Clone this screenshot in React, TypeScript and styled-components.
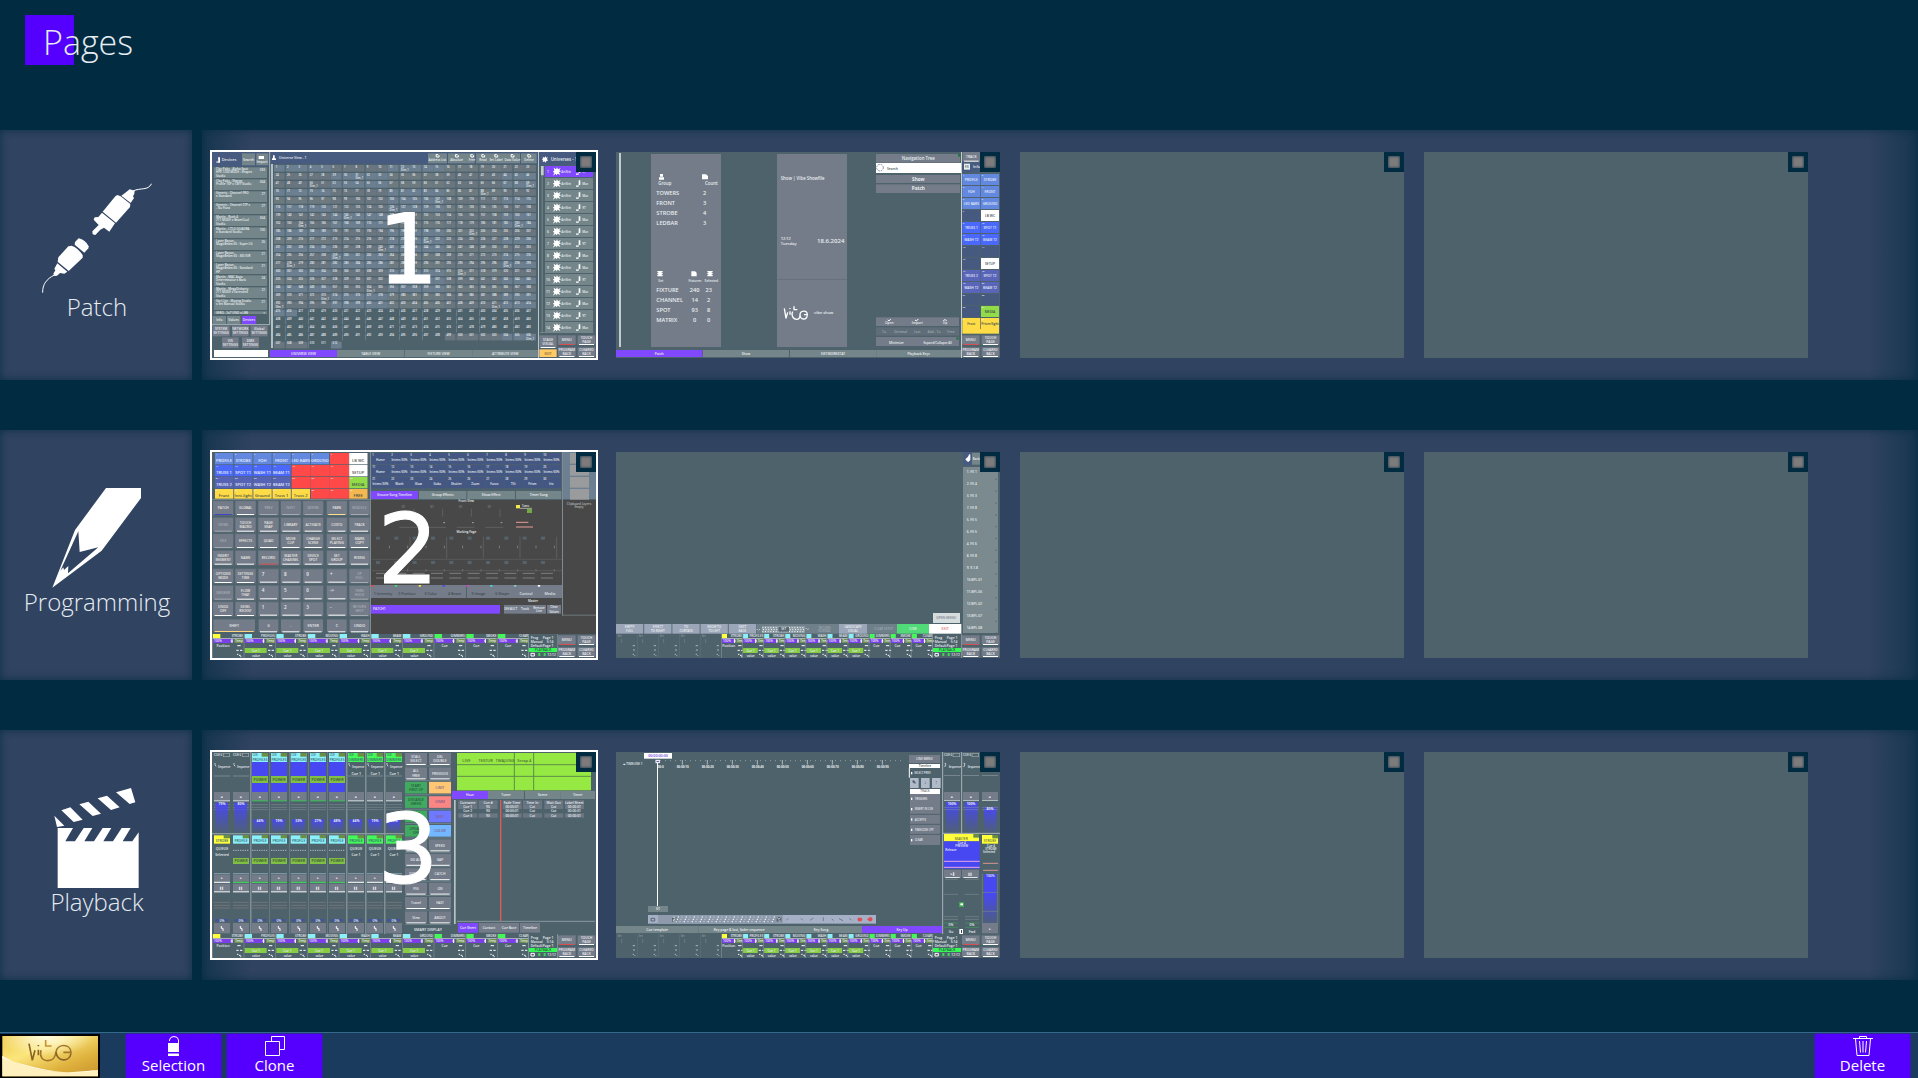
import React from "react";
import styled, { createGlobalStyle, css } from "styled-components";

const color = {
  page: "#002b40",
  panel: "#304361",
  screen: "#4e626c",
  accent: "#5500ff",
  bar: "#1b3b5e",
  purple: "#8048ff",
  key: "#747c89",
  soft: "#74868a",
  head: "#475a7f",
};

const GlobalStyle = createGlobalStyle`
  *, *::before, *::after { box-sizing: border-box; }
  body {
    margin: 0;
    background: ${color.page};
    color: #e6ecf2;
    font-family: "Open Sans", "Noto Sans", sans-serif;
  }
  button { font-family: inherit; color: inherit; border: 0; padding: 0; cursor: pointer; }
`;

const Page = styled.div`
  min-height: 100vh;
  display: flex;
  flex-direction: column;
`;

const Header = styled.header`
  height: 130px;
  padding: 15px 25px;
`;

const Title = styled.h1`
  margin: 0;
  width: 49px;
  height: 50px;
  padding-left: 18px;
  background: ${color.accent};
  font-size: 34px;
  line-height: 54px;
  font-weight: 300;
  white-space: nowrap;
`;

const Rows = styled.main`
  flex: 1;
  display: flex;
  flex-direction: column;
  gap: 50px;
  padding-bottom: 50px;
`;

const Row = styled.section`
  display: flex;
  gap: 10px;
  height: 250px;
`;

const Category = styled.button`
  flex: 0 0 192px;
  display: flex;
  flex-direction: column;
  align-items: center;
  justify-content: center;
  padding-left: 2px;
  background: ${color.panel};
  box-shadow: inset 0 0 8px rgba(0, 43, 64, 0.8);
`;

const CategoryName = styled.span`
  font-size: 24px;
  line-height: 28px;
  font-weight: 300;
  margin-bottom: 6px;
`;

const Strip = styled.div`
  flex: 1;
  min-width: 0;
  display: flex;
  gap: 20px;
  padding: 22px 10px;
  overflow: hidden;
  background:
    linear-gradient(90deg, rgba(0, 43, 64, 0.55), transparent 50px),
    linear-gradient(270deg, rgba(0, 43, 64, 0.55), transparent 50px),
    ${color.panel};
  box-shadow: inset 0 0 8px rgba(0, 43, 64, 0.7);
`;

const Slot = styled.div`
  position: relative;
  flex: 0 1 384px;
  height: 206px;
`;

const Thumb = styled.button<{ $selected?: boolean }>`
  display: block;
  width: 100%;
  height: 100%;
  background: ${color.screen};
  ${(p) => p.$selected && css`box-shadow: 0 0 0 2px #fff;`}
`;

const Screen = styled.svg`
  display: block;
  width: 100%;
  height: 100%;
  font-family: "Open Sans", "Noto Sans", sans-serif;
`;

const SlotNumber = styled.span`
  position: absolute;
  inset: 0 0 10px 8px;
  display: flex;
  align-items: center;
  justify-content: center;
  pointer-events: none;
  color: #fff;
  font-family: "DejaVu Sans", sans-serif;
  font-size: 96px;
  line-height: 100px;
  -webkit-text-stroke: 1px #fff;
`;

const Tick = styled.input`
  position: absolute;
  top: 0;
  right: 0;
  width: 20px;
  height: 20px;
  margin: 0;
  appearance: none;
  background: #7d7b7c;
  box-shadow: inset 0 0 0 4px ${color.page}, inset 0 0 3px 4px ${color.page};
`;

const Footer = styled.footer`
  display: flex;
  height: 46px;
  gap: 6px;
  padding: 1px 8px 0 0;
  border-top: 1px solid #356a8c;
  background: ${color.bar};
`;

const Brand = styled.button`
  flex: 0 0 100px;
  margin-right: 20px;
  background: #000;
`;

const Action = styled.button<{ $end?: boolean }>`
  flex: 0 0 95px;
  display: flex;
  flex-direction: column;
  align-items: center;
  padding-top: 2px;
  background: ${color.accent};
  box-shadow: 0 0 2px ${color.accent};
  margin-left: ${(p) => (p.$end ? "auto" : "0")};
  color: #fff;
  font-size: 15px;
  line-height: 18px;
`;

/* ---------- drawing helpers for the page previews ---------- */

type BoxProps = { x: number; y: number; w: number; h: number; f: string };
const B = ({ x, y, w, h, f }: BoxProps) => <rect x={x} y={y} width={w} height={h} fill={f} />;

type LabelProps = { x: number; y: number; t: string | number; s?: number; f?: string; a?: "start" | "middle" | "end"; b?: boolean };
const L = ({ x, y, t, s = 11, f = "#e8edf0", a = "start", b }: LabelProps) => (
  <text x={x} y={y} fontSize={s} fill={f} textAnchor={a} fontWeight={b ? 700 : 600}>{t}</text>
);

const Key = ({ x, y, w, h, t, t2, line, f = color.key, c = "#eceff2", s = 11 }: {
  x: number; y: number; w: number; h: number; t?: string; t2?: string; line?: string; f?: string; c?: string; s?: number;
}) => (
  <g>
    <B x={x} y={y} w={w} h={h} f={f} />
    {t && <L x={x + w / 2} y={y + h / 2 + (t2 ? -3 : 4)} t={t} a="middle" f={c} s={s} />}
    {t2 && <L x={x + w / 2} y={y + h / 2 + 10} t={t2} a="middle" f={c} s={s} />}
    {line && <B x={x + 4} y={y + h - 2} w={w - 8} h={3} f={line} />}
  </g>
);

const range = (n: number) => Array.from({ length: n }, (_, i) => i);

const SystemKeys = ({ x }: { x: number }) => (
  <g>
    <Key x={x} y={586} w={53} h={28} t="MENU" line="#d94f4f" s={10} />
    <Key x={x + 59} y={586} w={53} h={28} t="TOUCH" t2="PAGE" line="#fff" s={10} />
    <Key x={x} y={622} w={53} h={28} t="PROGRAM" t2="BACK" line="#fff" s={10} />
    <Key x={x + 59} y={622} w={53} h={28} t="CLEARED" t2="BACK" line="#fff" s={10} />
  </g>
);

const dockColors = ["#ffff3c", ...Array(6).fill("#8cf0fa"), ...Array(3).fill("#44f85a")];
const dockNames = ["STROBE", "PROFILES", "STROBE", "MOVING", "WASH", "BEAM", "GROUND", "DIMMERS", "SMOKE", "CLEAR"];

const Dock = ({ x, pitch, status }: { x: number; pitch: number; status: number }) => {
  const k = pitch / 95;
  return (
    <g>
      {dockColors.map((f, i) => {
        const l = x + i * pitch;
        return (
          <g key={i}>
            <B x={l - 3} y={582} w={2} h={72} f="#7d8c92" />
            <B x={l} y={582} w={Math.max(15, 22 * k)} h={12} f={f} />
            <L x={l + 90 * k} y={592} t={dockNames[i]} a="end" s={9} />
            <B x={l} y={594} w={91 * k} h={2} f="#cfd8da" />
            <B x={l} y={597} w={59 * k} h={12} f="#7a3fe8" />
            <L x={l + 3} y={606} t="100%" s={9} />
            <path d={`M${l + 57 * k} 597v12M${l + 53 * k} 603h6`} stroke="#fff" strokeWidth={3} />
            <B x={l + 64 * k} y={597} w={27 * k} h={12} f="#6f8f52" />
            <L x={l + 67 * k} y={606} t="Temp" s={8} />
            {i > 0 && i < 7 ? (
              <>
                <B x={l} y={624} w={66 * k} h={15} f="#86cc45" />
                <L x={l + 33 * k} y={635} t="Cue 1" s={9} a="middle" />
                <L x={l + 34 * k} y={652} t="value" s={9} a="middle" />
              </>
            ) : (
              <L x={l + 30 * k} y={622} t={i ? "Cue" : "Position"} s={10} a="middle" />
            )}
            <path d={`M${l + 73 * k} 617h10M${l + 70 * k} 631h7m4 0h7M${l + 72 * k} 643h4m2 3h5m-1 4h3`} stroke="#fff" strokeWidth={3} />
          </g>
        );
      })}
      <B x={status - 2} y={582} w={2} h={72} f="#9aa8ac" />
      <L x={status + 5} y={596} t="Prog" s={10} />
      <L x={status + 73} y={596} t="Page 1" s={10} a="end" />
      <L x={status + 5} y={608} t="Manual" s={10} />
      <L x={status + 73} y={608} t="5:14" s={10} a="end" />
      <L x={status + 5} y={620} t="Default" s={10} />
      <L x={status + 73} y={620} t="Page 1" s={10} a="end" />
      <B x={status} y={624} w={84} h={12} f="#35fa55" />
      <L x={status + 42} y={634} t="PLAYBACK" s={10} a="middle" f="#33504a" />
      <path d={`M${status + 6} 640h10v8h-10z`} fill="none" stroke="#fff" strokeWidth={3} />
      <B x={status + 28} y={639} w={6} h={9} f="#41d658" />
      <B x={status + 44} y={639} w={6} h={9} f="#41d658" />
      <L x={status + 55} y={648} t="12:12" s={10} />
    </g>
  );
};

const Tabs = ({ y, h, items }: { y: number; h: number; items: [number, number, string, boolean?][] }) => (
  <g>
    {items.map(([x, w, t, on]) => (
      <Key key={x} x={x} y={y} w={w} h={h} t={t} f={on ? color.purple : color.soft} s={10} />
    ))}
  </g>
);

const devices = [
  ["Clay Paky - Alpha Spot", "HPE 1200 MODE : Shapes", "Studio", "333"], ["Clay Paky - Sharpy", "Profile 10P x CMY Studio", "", "304"],
  ["Generic - Channel PRO", "x Standard", "", "27"], ["Generic - Channel CTP v", "- No Flora", "", "27"],
  ["Martin - Rush 4", "211 MODE x BeamCool", "Studio", "304"], ["Martin - LT2.0 QUADRA", "x Standard Studio", "", "100"],
  ["Laser Rayan -", "MagicBeam 60 : Super LG", "", "26"], ["Laser Rayan -", "MagicBeam 60 : 300 NIR", "", "21"],
  ["Laser Rayan -", "MagicBeam 60 : Standard", "HP", "21"], ["Martin - MAC Aura", "Determinator x Back", "Studio", "24"],
  ["Martin - MegaDisharty", "211 MODE x Extended", "Studio", "22"], ["Vari Lite - Moving Studio", "x Set Manual Studio", "", "21"],
  ["VERO - 2x7 UNO x LBB", "", "", "1"],
];
const columnStarts = [1, 3, 6, 8, 11, 13, 16, 18, 21];

const PatchScreen = () => (
  <Screen viewBox="36 36 1152 618" preserveAspectRatio="none" aria-hidden="true">
    <B x={36} y={36} w={172} h={44} f={color.head} />
    <path d="M54 52h6v16h-8v-4h3zM48 62v5l3 3" fill="#fff" />
    <L x={65} y={62} t="Devices" s={12} />
    <Key x={126} y={40} w={39} h={36} t="Search" f={color.soft} s={10} />
    <Key x={169} y={40} w={36} h={36} f={color.soft} />
    <B x={176} y={48} w={16} h={9} f="#fff" />
    <L x={186} y={70} t="Import" a="middle" s={10} />
    {devices.map((d, i) => {
      const y = 82 + i * 36;
      return (
        <g key={i}>
          <B x={42} y={y} w={159} h={i === 12 ? 8 : 32} f={color.soft} />
          <L x={48} y={y + 8} t={d[0]} s={9} />
          <L x={48} y={y + 18} t={d[1]} s={9} />
          <L x={48} y={y + 28} t={d[2]} s={9} />
          <L x={195} y={y + 12} t={d[3]} s={9} a="end" />
        </g>
      );
    })}
    <B x={36} y={522} w={170} h={6} f={color.screen} />
    <Tabs y={528} h={24} items={[[38, 40, "Info"], [81, 40, "Values"], [126, 42, "Devices", true]]} />
    <path d="M209 36V554H36" fill="none" stroke="#aab6bb" strokeWidth={3} />
    <Key x={38} y={557} w={51} h={32} t="SYSTEM" t2="SETTINGS" s={10} />
    <Key x={96} y={557} w={50} h={32} t="NETWORK" t2="SETTINGS" s={10} />
    <Key x={152} y={557} w={51} h={32} t="Global" t2="SETTINGS" s={10} />
    <Key x={66} y={592} w={50} h={32} t="VIS" t2="SETTINGS" s={10} />
    <Key x={126} y={592} w={51} h={32} t="DMX" t2="SETTINGS" s={10} />
    <B x={42} y={630} w={162} h={21} f="#fff" />

    <B x={212} y={36} w={802} h={36} f={color.head} />
    <path d="M216 60v-4l3-3v-7h5v7l4 3v4z" fill="#fff" />
    <L x={237} y={56} t="Universe View - 1" s={10} />
    <Key x={684} y={40} w={57} h={30} f={color.soft} />
    <Key x={744} y={40} w={80} h={30} f={color.soft} />
    <Key x={828} y={40} w={132} h={30} f={color.soft} />
    <Key x={963} y={40} w={47} h={30} f={color.soft} />
    {([[712, "Address List"], [770, "Absolute"], [816, "Free"], [849, "Read"], [888, "Set Label"], [937, "Data Value"], [987, "Delete"]] as [number, string][]).map(([x, t]) => (
      <g key={x}>
        <path d={`M${x - 4} 44h6l3 3v4h-8z`} fill="none" stroke="#fff" strokeWidth={3} />
        <L x={x} y={63} t={t} a="middle" s={9} />
      </g>
    ))}
    <B x={213} y={72} w={6} h={552} f="#b4c1c2" />
    {range(512).map((n) => {
      const r = Math.floor(n / 23);
      const c = n % 23;
      const x = 222 + c * 34.17;
      const y = 75 + r * 24.1;
      const lit = r < 18 || n < 416 || (r === 21 && c > 14) || (r === 22 && (c < 3 || c === 5));
      const seed = (r * 7 + Math.floor(c / 5) * 3 + r * r) % 5;
      const tagged = (n * 37 + 11) % 19 === 0;
      return (
        <g key={n}>
          {lit && <B x={x + (columnStarts.includes(c) ? 1 : 0)} y={y} w={columnStarts.includes(c + 1) ? 32 : 34} h={20} f={seed < 2 ? "#6b7f91" : seed < 4 ? "#69757f" : "#6d7a80"} />}
          {!lit && columnStarts.includes(c) && <B x={x} y={y} w={2} h={20} f="#77878e" />}
          <L x={x + 5} y={y + 8} t={n + 1} s={8} f="#f0f4f6" />
          {tagged && lit && <L x={x + 5} y={y + 18} t="Dim_1" s={8} />}
        </g>
      );
    })}
    <Tabs y={630} h={21} items={[[210, 201, "UNIVERSE VIEW", true], [411, 202, "TABLE VIEW"], [615, 202, "FIXTURE VIEW"], [817, 197, "ATTRIBUTE VIEW"]]} />

    <B x={1014} y={36} w={3} h={618} f="#bcc6ca" />
    <B x={1018} y={36} w={170} h={40} f={color.head} />
    <path d="M1028 50l5 3 4-4 2 4 5-1-3 5 3 5-5 1-2 5-4-4-5 3 1-6-3-3 3-3z" fill="#fff" />
    <L x={1052} y={62} t="Universes - 1" s={13} />
    <B x={1023} y={78} w={8} h={28} f="#c3cdcd" />
    <B x={1025} y={106} w={3} h={470} f="#74868a" />
    {range(14).map((i) => {
      const y = 78 + i * 36;
      return (
        <g key={i}>
          <B x={1035} y={y} w={144} h={33} f={i ? color.soft : color.purple} />
          <L x={1044} y={y + 20} t={i + 1} a="middle" s={10} />
          <path transform={`translate(1071 ${y + 16})`} d="M-10-11l7 5 3-6 3 6 8-4-4 7 5 3-6 3 4 8-8-4-3 5-3-5-8 6 4-9-5-3 5-3z" fill="#fff" />
          <L x={1084} y={y + 20} t="ArtNet" s={9} />
          <path transform={`translate(1133 ${y})`} d="M3 7h5v14h-5v5h-8v-4l4 1 4-3z" fill="#fff" />
          <L x={1147} y={y + 20} t={i % 3 ? "Mac" : "97"} s={9} />
        </g>
      );
    })}
    <B x={1020} y={576} w={160} h={3} f="#74868a" />
    <Key x={1018} y={586} w={52} h={37} t="STAGE" t2="VISUAL" line="#fff" s={10} />
    <Key x={1018} y={628} w={52} h={23} t="EDIT" f="#ffc966" c="#795f30" s={10} />
    <SystemKeys x={1074} />
  </Screen>
);

const Info = ({ rows, y, cols }: { rows: (string | number)[][]; y: number; cols: number[] }) => (
  <g>
    {rows.map((r, i) => (
      <g key={i}>
        <L x={154} y={y + i * 30} t={r[0]} s={17} />
        {r.slice(1).map((v, j) => <L key={j} x={cols[j]} y={y + i * 30} t={v} s={17} a="middle" />)}
      </g>
    ))}
  </g>
);

const ShowScreen = () => (
  <Screen viewBox="33 36 1152 618" preserveAspectRatio="none" aria-hidden="true">
    <B x={42} y={39} w={6} h={582} f="#c2cccc" />
    <B x={138} y={42} w={210} h={579} f={color.key} />
    <B x={516} y={42} w={210} h={579} f={color.key} />
    <path d="M165 102h9v8h-9zM162 112h15v7h-15zM291 103h12l6 5v10h-18z" fill="#fff" />
    <L x={160} y={136} t="Group" s={13} />
    <L x={338} y={136} t="Count" s={13} a="end" />
    <Info y={166} cols={[299]} rows={[["TOWERS", 2], ["FRONT", 3], ["STROBE", 4], ["LEDBAR", 3]]} />
    <path d="M157 393h16v4h-3v2h3v4h-3v2h3v4h-16v-4h3v-2h-3v-4h3v-2h-3zM259 394h11l5 4v11h-16zM307 393h16v4h-3v2h3v4h-3v2h3v4h-16v-4h3v-2h-3v-4h3v-2h-3z" fill="#fff" />
    <L x={160} y={425} t="Set" s={10} />
    <L x={270} y={425} t="Fixtures" s={10} a="middle" />
    <L x={319} y={425} t="Selected" s={10} a="middle" />
    <Info y={457} cols={[269, 311]} rows={[["FIXTURE", 240, 23], ["CHANNEL", 14, 2], ["SPOT", 93, 8], ["MATRIX", 0, 0]]} />
    <L x={527} y={120} t="Show | Vibe Showfile" s={13} />
    <L x={527} y={300} t="12:12" s={12} />
    <L x={527} y={315} t="Tuesday" s={12} />
    <L x={718} y={309} t="18.6.2024" s={18} a="end" />
    <B x={516} y={417} w={210} h={3} f="#66717c" />
    <path d="M538 505l5 30 5-18M555 514v10M555 504v3M567 499v10h10M563 515c-5 8 0 23 12 23 9 0 10-10 10-14 0-12 22-16 22 0h-10M607 526c-3 16-21 14-22-2" fill="none" stroke="#fff" strokeWidth={4} />
    <L x={627} y={522} t="vibe.show" s={12} />
    <B x={813} y={42} w={252} h={26} f={color.key} />
    <L x={940} y={60} t="Navigation Tree" s={13} a="middle" />
    <B x={1059} y={42} w={8} h={8} f="#267346" />
    <B x={813} y={69} w={255} h={30} f="#fff" />
    <circle cx={825} cy={83} r={10} fill="none" stroke="#435565" strokeWidth={2} strokeDasharray="5 3" />
    <L x={846} y={89} t="Search" s={10} f="#455" />
    <B x={813} y={105} w={252} h={24} f={color.key} />
    <L x={940} y={122} t="Show" s={14} a="middle" b />
    <B x={813} y={133} w={252} h={26} f={color.key} />
    <L x={940} y={151} t="Patch" s={14} a="middle" b />
    <B x={813} y={532} w={249} h={26} f={color.key} />
    <path d="M848 540l4 3 5-6M930 540l4 3 6-6M1015 543l5-5 5 5M870 598h9M993 598h11M998 593v10" fill="none" stroke="#fff" strokeWidth={3} />
    <L x={853} y={553} t="Open" a="middle" s={10} />
    <L x={937} y={553} t="Import" a="middle" s={10} />
    <L x={1020} y={553} t="Up" a="middle" s={10} />
    <B x={813} y={562} w={249} h={25} f="#5e6d78" />
    {["To", "Decimal", "Last", "Add - To", "Time"].map((t, i) => <L key={t} x={837 + i * 50} y={578} t={t} s={10} a="middle" f="#9ba9b0" />)}
    <B x={813} y={591} w={249} h={27} f={color.key} />
    <L x={874} y={613} t="Minimize" s={10} a="middle" />
    <L x={998} y={613} t="Expand/Collapse All" s={9} a="middle" />
    <B x={1054} y={592} w={7} h={7} f="#267346" />
    <Tabs y={630} h={21} items={[[33, 259, "Patch", true], [294, 258, "Show"], [555, 259, "NETWORKSTAT"], [814, 254, "Playback Keys"]]} />
    <B x={1068} y={36} w={3} h={618} f="#c2cccc" />
    <Key x={1073} y={36} w={52} h={28} t="TRACK" line="#fff" s={10} />
    <B x={1071} y={67} w={54} h={30} f={color.head} />
    <B x={1077} y={71} w={18} h={18} f="#e8eeee" />
    <L x={1086} y={85} t="FX" s={10} a="middle" f="#456" />
    <L x={1104} y={84} t="Info" s={11} />
    {([
      ["PROFILE", "STROBE", "#6288e0"], ["FOH", "FRONT", "#6288e0"], ["LED BARS", "GROUND", "#6288e0"], ["", "LB WC", "w"],
      ["TRUSS 1", "SPOT T1", "#4a69fa"], ["WASH T2", "BEAM T2", "#4a69fa"], ["", "", ""], ["", "SETUP", "w"],
      ["TRUSS 2", "SPOT T2", "#5865b8"], ["WASH T2", "BEAM T2", "#5865b8"], ["", "", ""], ["", "MEDIA", "g"],
      ["Frost", "Prism/light", "#ffdc45"],
    ] as string[][]).map(([a, b, f], i) => {
      const special = f === "w" || f === "g" || f === "";
      const right = f === "w" ? "#fff" : f === "g" ? "#91dc48" : f || "#465a80";
      const dark = f === "w" || f === "g" || i === 12 ? "#3c4a50" : "#e6ecf8";
      return (
        <g key={i}>
          <Key x={1072} y={102 + i * 36} w={54} h={33} f={special ? "#465a80" : f} t={a} c={dark} s={10} />
          <Key x={1128} y={102 + i * 36} w={54} h={33} f={right} t={b} c={dark} s={10} />
          <L x={1073} y={109 + i * 36} t={i * 2 + 1} s={7} />
          <L x={1130} y={109 + i * 36} t={i * 2 + 2} s={7} />
        </g>
      );
    })}
    <B x={1072} y={567} w={110} h={14} f="#ffdc45" />
    <SystemKeys x={1071} />
  </Screen>
);

const groupRows = [
  ["PROFILE", "STROBE", "FOH", "FRONT", "LED BARS", "GROUND", "", "LB WC"],
  ["TRUSS 1", "SPOT T1", "WASH T1", "BEAM T1", "", "", "", "SETUP"],
  ["TRUSS 2", "SPOT T2", "WASH T2", "BEAM T2", "", "", "", "MEDIA"],
  ["Front", "Inni-light", "Ground", "Truss 1", "Truss 2", "", "", "FREE"],
];
const groupFill = ["#6288e0", "#4a69fa", "#5663b4", "#ffdc45"];
const lastFill = ["#fff", "#fff", "#91dc48", "#f5b850"];
const keyX = [40, 107, 176, 243, 310, 381, 449];
const keyY = [184, 234, 283, 333, 388, 438, 487];
const keyLabels = [
  ["PATCH", "GLOBAL", "PREV", "NEXT", "DEFINE", "PARK", "MODULE"],
  ["VIEWS", "TOUCH|MACRO", "PAGE|SNAP", "LIBRARY", "ACTIVATE", "CUSTO", "TRACK"],
  ["FILE", "EFFECTS", "QUAD", "MOVE|CLIP", "CHANGE|SCENE", "SELECT|PLAYING", "MARK|COPY"],
  ["INSERT|SEGMENT", "NAME", "RECORD", "MASTER|CHANNEL", "DEVICE|SPOT", "SET|GROUP", "RISING"],
  ["OPTIONS|MODE", "SETTINGS|TIME", "7", "8", "9", "+", "UP|FULL"],
  ["SMOKER", "FLOW|THAT", "4", "5", "6", "->", "THRU|HOLD"],
  ["UNDO|OFF", "DESEL|RECENT", "1", "2", "3", "-", "RETURN|HELP"],
];

const ProgrammingScreen = () => (
  <Screen viewBox="36 36 1152 618" preserveAspectRatio="none" aria-hidden="true">
    {groupRows.map((row, r) => row.map((t, c) => {
      const red = t === "" || c === 6;
      const f = c === 7 ? lastFill[r] : red ? "#ff4848" : groupFill[r];
      const dark = c === 7 || r === 3;
      return (
        <g key={`${r}-${c}`}>
          <B x={45 + c * 57.5} y={39 + r * 36} w={red ? 57 : 55} h={r === 3 ? 29 : 34} f={f} />
          {t && <L x={72 + c * 57.5} y={(r === 3 ? 172 : 66 + r * 36)} t={t} s={12} a="middle" f={dark ? "#474c48" : "#e8eefc"} />}
          <L x={47 + c * 57.5} y={46 + r * 36} t={c + 1 + r * 10} s={7} />
        </g>
      );
    }))}
    <B x={36} y={177} w={476} h={3} f="#74868a" />
    {keyLabels.map((row, r) => row.map((t, c) => {
      const [a, b] = t.split("|");
      const dim = (r === 0 && c > 1 && c !== 5) || (c === 0 && (r === 1 || r === 2 || r === 5)) || (c === 6 && r > 3);
      const digit = r > 3 && c > 1 && c < 6;
      const line = r === 0 && c === 0 ? "#4242c8" : r === 0 && c === 5 ? "#ffdf90" : r === 3 && c === 2 ? "#d94f4f" : dim ? "#a4abb1" : "#fff";
      return (
        <g key={`${r}-${c}`}>
          <B x={keyX[c] - 2} y={keyY[r] - 3} w={63} h={46} f="#5d6c77" />
          <B x={keyX[c]} y={keyY[r]} w={59} h={40} f={color.key} />
          {digit
            ? <><L x={keyX[c] + 9} y={keyY[r] + 19} t={t} s={14} /><B x={keyX[c] + 4} y={keyY[r] + 37} w={51} h={3} f={line} /></>
            : <Key x={keyX[c]} y={keyY[r]} w={59} h={40} t={a} t2={b} line={line} c={dim ? "#a8afb6" : "#eeeae4"} s={10} />}
        </g>
      );
    }))}
    <Key x={40} y={538} w={125} h={37} t="SHIFT" line="#ffd47e" />
    {[[176, "0"], [243, "."], [310, "ENTER"], [381, "C"], [449, "UNDO"]].map(([x, t]) => (
      <Key key={x} x={x as number} y={538} w={59} h={38} t={t as string} line="#fff" />
    ))}
    <B x={510} y={36} w={3} h={618} f="#7d8c92" />
    {range(30).map((n) => {
      const r = Math.floor(n / 10);
      const c = n % 10;
      return (
        <g key={n}>
          <B x={514 + c * 57} y={39 + r * 36} w={56} h={34} f="#435782" />
          <L x={517 + c * 57} y={48 + r * 36} t={n + 1} s={8} />
          <L x={541 + c * 57} y={64 + r * 36} t={r === 2 ? ["Intens 50%", "Wash", "Glow", "Gobo", "Shutter", "Zoom", "Focus", "Tilt", "Prism", "Iris"][c] : c ? "Intens 50%" : "Home"} s={9} a="middle" />
        </g>
      );
    })}
    <Tabs y={153} h={24} items={[[513, 141, "Groove Song Timeline", true], [657, 142, "Group Effects"], [802, 143, "Show Effect"], [948, 136, "Timer Song"]]} />
    <B x={513} y={180} w={573} h={255} f="#484848" />
    <B x={1088} y={180} w={100} h={345} f="#484848" />
    <B x={513} y={474} w={675} h={108} f="#484848" />
    <B x={1086} y={36} w={3} h={491} f="#7d8c92" />
    <B x={1086} y={524} w={102} h={3} f="#6d787b" />
    <B x={1089} y={36} w={99} h={141} f="#6c8091" />
    {[39, 75, 111, 147].map((y) => <B key={y} x={1110} y={y} w={57} h={32} f="#9a9b9c" />)}
    <L x={1137} y={194} t="Clipboard Layers" s={9} a="middle" f="#b4b8ba" />
    <L x={1137} y={205} t="Empty" s={9} a="middle" f="#b4b8ba" />
    <L x={799} y={187} t="Front View" s={9} a="middle" />
    <L x={799} y={280} t="Working Page" s={9} a="middle" />
    {range(4).map((i) => (
      <g key={i}>
        <path d={`M${642 + i * 86} 206v24M${598 + i * 86} 262h54`} stroke="#6b6b6b" strokeWidth={2} />
        <L x={605 + i * 86} y={203} t="01" s={9} f="#81898c" />
        <path d={`M${644 + i * 86} 248h5`} stroke="#ddd" strokeWidth={2} />
      </g>
    ))}
    <B x={948} y={195} w={12} h={10} f="#f5e848" />
    <path d="M960 205h36" stroke="#ddd" strokeWidth={2} />
    <L x={966} y={202} t="Toms" s={8} />
    <B x={981} y={206} w={15} h={13} f="#73a844" />
    <path d="M948 247h37M948 261h51" stroke="#e79c94" strokeWidth={3} />
    {range(20).map((n) => {
      const c = n % 10;
      const y = n < 10 ? 290 : 363;
      return (
        <g key={n}>
          <B x={528 + c * 55} y={y} w={12} h={9} f="#54646a" />
          <path d={n < 10 ? `M${568 + c * 55} 317v8` : `M${528 + c * 55} 400h36M${528 + c * 55} 414h36M${568 + c * 55} 388v6`} stroke="#999" strokeWidth={2} />
          {n < 10 && c % 2 === 1 && <path d={`M${575 + c * 55} 290v65`} stroke="#686868" strokeWidth={2} />}
        </g>
      );
    })}
    <path d="M516 358H1086M516 392H1086" stroke="#606060" strokeWidth={2} />
    <B x={513} y={435} w={285} h={39} f={color.key} />
    <B x={801} y={435} w={285} h={39} f={color.key} />
    {["1 Intensity", "2 Position", "3 Color", "4 Beam", "5 Image", "6 Shape", "Control", "Media"].map((t, i) => (
      <g key={t}>
        <L x={549 + i * 71.5} y={464} t={t} s={11} a="middle" f={i > 5 ? "#e1e6ea" : "#3f4952"} />
        <B x={513 + i * 71.5} y={435} w={7} h={5} f={["#f04848", "#48e068", "#ffdf48", "#4848f0", "#d048d0", "#48d8d8", "#8cb", "#fff"][i]} />
      </g>
    ))}
    <B x={513} y={495} w={387} h={26} f={color.purple} />
    <L x={519} y={509} t="PATCH1" s={10} />
    <L x={999} y={486} t="Master" s={9} a="middle" />
    <B x={912} y={495} w={126} h={26} f={color.key} />
    <L x={932} y={509} t="DEFAULT" s={9} a="middle" />
    <L x={975} y={509} t="Track" s={9} a="middle" />
    <L x={1017} y={506} t="Remove" s={9} a="middle" />
    <L x={1017} y={517} t="Line" s={9} a="middle" />
    <Key x={1041} y={495} w={42} h={26} t="Clear" t2="Values" s={9} />
    <Dock x={39} pitch={95} status={987} />
    <B x={1071} y={582} w={2} h={72} f="#9aa8ac" />
    <B x={1073} y={582} w={115} h={72} f={color.screen} />
    <SystemKeys x={1074} />
  </Screen>
);

const EmptyDock = () => (
  <g>
    {range(5).map((i) => (
      <g key={i}>
        <B x={96 + i * 63} y={584} w={2} h={68} f="#5d7078" />
        <L x={38 + i * 63} y={592} t="Set" s={8} f="#8b999e" />
        <path d={`M${50 + i * 63} 597v12`} stroke="#71858b" strokeWidth={2} />
        <path d={`M${83 + i * 63} 617h7M${84 + i * 63} 630h6M${83 + i * 63} 643h4m1 4h3`} stroke="#d9e0e2" strokeWidth={2} />
      </g>
    ))}
  </g>
);

const VisualScreen = () => (
  <Screen viewBox="33 36 1152 618" preserveAspectRatio="none" aria-hidden="true">
    <B x={1074} y={36} w={27} h={40} f={color.head} />
    <path d="M1081 58l8-8 4-8 3 2v16l-6 6-4-2z" fill="#fff" />
    <Key x={1101} y={39} w={25} h={35} t="Back" f={color.soft} s={9} />
    <B x={1074} y={81} w={105} h={498} f="#7a8a8e" />
    {["1. FX 1", "2. FX 4", "3. FX 3", "7. FX 8", "5. FX 5", "6. FX 5", "4. FX 6", "8. FX 8", "9. 9-1.8", "10.BPL.01", "11.BPL.05", "12.BPL.02", "13.BPL.07", "14.BPL.08"].map((t, i) => (
      <g key={t}>
        <L x={1085} y={98 + i * 36} t={t} s={10} />
        <B x={1172} y={116 + i * 35.5} w={3} h={4} f="#4e626c" />
      </g>
    ))}
    <B x={984} y={519} w={81} h={30} f="#d5dcde" />
    <L x={1024} y={537} t="OPEN MENU" s={10} a="middle" f="#75808a" />
    {["EMPTY|FULL", "EFFECT|TO RIGHT", "TO|CURTAIN", "SHOW TO|TO LEFT", "NEXT|BACK"].map((t, i) => {
      const [a, b] = t.split("|");
      return <Key key={t} x={33 + i * 84.5} y={552} w={82} h={29} t={a} t2={b} f="#9ba6b8" s={9} />;
    })}
    <B x={454} y={552} w={422} h={29} f="#70808a" />
    <B x={471} y={558} w={129} h={21} f="#8b9aa3" />
    <path d="M456 568l4 4 4-4h5M472 563h126M474 569h126M472 575h128M602 564l5 5 5-3" stroke="#fff" strokeWidth={3} strokeDasharray="3 5" fill="none" />
    <B x={520} y={561} w={32} h={14} f="#596773" />
    <L x={536} y={571} t="SET" s={9} a="middle" />
    <L x={659} y={566} t="RECORD" s={9} a="middle" f="#9aa7ae" />
    <L x={659} y={576} t="NORMAL" s={9} a="middle" f="#9aa7ae" />
    <Key x={702} y={552} w={84} h={29} t="LANDSCAPE" t2="VISUAL" f="#9ba6b8" s={9} />
    <L x={836} y={570} t="CLEAR SETUP" s={9} a="middle" f="#9aa7ae" />
    <Key x={876} y={552} w={96} h={29} t="LIVE" f="#50db78" s={11} />
    <Key x={972} y={552} w={97} h={29} t="EXIT" f="#fff" c="#df6d6d" s={11} />
    <EmptyDock />
    <Dock x={351} pitch={63.3} status={984} />
    <B x={1068} y={582} w={2} h={72} f="#9aa8ac" />
    <SystemKeys x={1071} />
  </Screen>
);

const laneX = [42, 99, 156, 213, 272, 330, 387, 444, 501, 558];

const PlaybackScreen = () => (
  <Screen viewBox="36 36 1152 618" preserveAspectRatio="none" aria-hidden="true">
    <defs>
      <linearGradient id="fader" x1="0" y1="0" x2="0" y2="1">
        <stop offset="0" stopColor="#4848f2" />
        <stop offset="1" stopColor="#4848f2" stopOpacity="0.1" />
      </linearGradient>
    </defs>
    {laneX.map((x, i) => {
      const cyan = i > 1 && i < 7;
      const green = i > 6;
      const chip = green ? "#44f85a" : "#8cf0fa";
      return (
        <g key={x}>
          {(i === 2 || i > 6) && <B x={x - 5} y={36} w={3} h={546} f="#98a6ab" />}
          {i > 2 && i < 7 && <B x={x - 5} y={36} w={2} h={546} f="#74858c" />}
          {i > 1 ? (
            <>
              <B x={x} y={39} w={48} h={27} f={chip} />
              <B x={x + 29} y={39} w={19} h={11} f="#688f42" />
              <L x={x + 24} y={62} t={green ? "DIMMERS" : "PROFILES"} s={10} a="middle" f="#35666c" />
              <L x={x + 2} y={48} t="CUE" s={8} f="#35666c" />
            </>
          ) : (
            <>
              <L x={x} y={48} t="CUE 0" s={9} />
              <rect x={x + 28} y={40} width={19} height={10} fill="none" stroke="#9aa" strokeWidth={2} />
            </>
          )}
          {cyan ? (
            <>
              <B x={x} y={66} w={48} h={90} f="#4848f2" />
              <B x={x} y={108} w={48} h={21} f="#80bf45" />
              <L x={x + 24} y={123} t="POWER" s={11} a="middle" f="#384a3a" />
            </>
          ) : (
            <>
              <path d={`M${x + 3} 69v5l3 5`} stroke="#fff" strokeWidth={2} fill="none" />
              <L x={x + 12} y={83} t="Sequence" s={8} />
              {green && <L x={x + 25} y={104} t="Cue 1" s={11} a="middle" />}
              <B x={x} y={107} w={48} h={2} f="#8c989d" />
            </>
          )}
          <Key x={x} y={156} w={48} h={25} t="■" s={9} />
          <B x={x} y={181} w={48} h={3} f={cyan ? "#44c95b" : "#dfe5e6"} />
          <path d={`M${x} 194h48M${x} 202h48M${x} 209h48`} stroke="#7c8a8e" strokeWidth={2} />
          <rect x={x + 4} y={i < 2 ? 188 : 238} width={38} height={i < 2 ? 88 : 38} fill="url(#fader)" />
          <L x={x + 24} y={i < 2 ? 196 : 245} t={["79%", "80%", "44%", "19%", "33%", "27%", "48%", "44%", "19%", "40%"][i]} s={10} a="middle" b />
          <B x={x} y={286} w={48} h={25} f={i === 0 ? "#ffff3c" : chip} />
          <B x={x + 29} y={285} w={19} h={10} f="#688f42" />
          <L x={x + 24} y={307} t={i ? "PROFILE" : "STROBE"} s={10} a="middle" f="#35666c" />
          {green || i === 0 ? (
            <>
              <L x={x + 24} y={331} t="QUEUE" s={11} a="middle" />
              <L x={x + 24} y={349} t={green ? "Cue 1" : "Selected"} s={10} a="middle" />
            </>
          ) : (
            <>
              <path d={`M${x} 331h48`} stroke="#dfe5e6" strokeWidth={2} strokeDasharray="4 3" />
              <B x={x} y={354} w={48} h={18} f="#80bf45" />
              <L x={x + 24} y={367} t="POWER" s={11} a="middle" f="#384a3a" />
            </>
          )}
          <B x={x} y={399} w={48} h={2} f="#91b3c0" />
          <Key x={x} y={403} w={48} h={22} t="►" s={9} />
          <B x={x} y={425} w={48} h={4} f={i > 0 && i < 7 ? "#44c95b" : "#dfe5e6"} />
          <Key x={x} y={431} w={48} h={23} t="▌▌" s={8} />
          <B x={x} y={454} w={48} h={3} f="#fff" />
          <path d={`M${x} 487h48M${x} 496h48M${x} 504h48`} stroke="#857f7d" strokeWidth={2} />
          <B x={x + 4} y={537} w={38} h={7} f="#40549c" />
          <L x={x + 24} y={545} t="0%" s={10} a="middle" />
          <Key x={x} y={549} w={48} h={31} />
          <path d={`M${x + 22} 558v7h5v8`} fill="none" stroke="#fff" strokeWidth={3} />
        </g>
      );
    })}
    <B x={36} y={279} w={576} h={4} f="#8999a0" />
    {[
      ["STALL|SELECT", "DEL|DOUBLE", "", ""], ["ALL|FREE", "PREVIOUS", "", ""], ["START|FIRST UP", "LIMIT", "#41a960", "#ffc774"],
      ["DISTANCE|GREEN", "DIMM", "#41a960", "#fa8585"], ["NEXT|CUE", "NEXT", "#41a960", "#6e79ff"], ["UPDATE|OFF", "COLOR", "#41a960", "#72b7ff"],
      ["SNAP", "SPEED", "", ""], ["GO ALL", "GAP", "", ""], ["DOUBLE", "CATCH", "", ""], ["PIG", "ON", "", ""], ["Travel", "FAST", "", ""], ["View", "ABOUT", "", ""],
    ].map(([l, r, fl, fr], i) => {
      const [a, b] = l.split("|");
      const [c, d] = r.split("|");
      const y = 39 + i * 43.2;
      return (
        <g key={l}>
          <Key x={615} y={y} w={66} h={35} t={a} t2={b} f={fl || color.key} c={fl ? "#27573a" : "#e6eaee"} s={10} line={fl ? undefined : "#fff"} />
          <Key x={687} y={y} w={66} h={35} t={c} t2={d} f={fr || color.key} c={fr ? "#81608a" : "#e6eaee"} s={10} line={fr ? undefined : "#fff"} />
          <path d={`M615 ${y + 39}H753`} stroke="#819298" strokeWidth={2} />
        </g>
      );
    })}
    <Key x={615} y={556} w={138} h={24} t="SMART DISPLAY" f={color.screen} />
    <B x={771} y={39} w={402} h={112} f="#96e843" />
    <path d="M771 74h402M771 109h402M943 39v112M1001 39v112" stroke="#5d8c49" strokeWidth={3} />
    {["LIVE", "TESTUR", "TWAJUNG", "Scrap 4"].map((t, i) => <L key={t} x={799 + i * 58} y={65} t={t} s={12} a="middle" f="#4b6e36" />)}
    <Tabs y={153} h={24} items={[[756, 108, "Hour", true], [864, 108, "Tuner"], [975, 106, "Scene"], [1081, 104, "Timer"]]} />
    <B x={762} y={180} w={5} h={372} f="#b7c3c5" />
    {range(4).map((r) => [775, 836, 908, 969, 1033, 1095].map((x, c) => (
      <g key={`${r}-${c}`}>
        {r !== 2 && <B x={x} y={181 + r * 13} w={57} h={13} f="#6a7682" />}
        <L x={x + 28} y={191 + r * 13} t={r === 0 ? ["Cuename", "Cue #", "Fade Time", "Time In", "Wait Out", "Label Sheet"][c] : c === 0 ? `Cue ${r}` : c === 1 ? 90 : c % 3 === 2 ? "00:00:01" : "Cut"} s={10} a="middle" />
      </g>
    )))}
    <B x={900} y={180} w={4} h={363} f="#df5c55" />
    <path d="M771 544H1185" stroke="#8a999e" strokeWidth={3} />
    <Key x={774} y={549} w={60} h={29} t="Cue Sheet" f={color.purple} s={10} />
    <Key x={837} y={549} w={120} h={29} s={10} />
    <L x={867} y={567} t="Contact" s={10} a="middle" />
    <L x={927} y={567} t="Cue Base" s={10} a="middle" />
    <Key x={960} y={549} w={60} h={29} t="Timeline" s={10} />
    <Dock x={39} pitch={95} status={987} />
    <B x={1071} y={582} w={2} h={72} f="#9aa8ac" />
    <SystemKeys x={1074} />
  </Screen>
);

const TimelineScreen = () => (
  <Screen viewBox="33 36 1152 618" preserveAspectRatio="none" aria-hidden="true">
    <B x={117} y={39} w={84} h={17} f="#fff" />
    <L x={159} y={51} t="00:00:00:00" s={11} a="middle" f="#6a3de0" />
    <path d="M55 73h6" stroke="#fff" strokeWidth={3} />
    <L x={64} y={76} t="TIMELINE 1" s={9} />
    <path d="M165 62H895" stroke="#aebabd" strokeWidth={3} strokeDasharray="2 13" />
    {range(10).map((i) => (
      <g key={i}>
        {i > 0 && <path d={`M${157 + i * 75} 60v14`} stroke="#dfe5e6" strokeWidth={2} />}
        <L x={158 + i * 75} y={83} t={i ? `00:00:${i}0` : "00:0"} s={9} a={i ? "middle" : "start"} b />
      </g>
    ))}
    <B x={156} y={60} w={3} h={438} f="#fff" />
    <rect x={153} y={61} width={10} height={7} fill="#684caf" stroke="#fff" strokeWidth={3} />
    <Key x={129} y={498} w={60} h={18} t="01" f={color.soft} />
    <B x={129} y={525} w={684} h={26} f="#a5afc6" />
    <B x={159} y={525} w={39} h={26} f="#8f9bad" />
    <B x={198} y={525} w={335} h={26} f="#8d9aac" />
    <path d="M138 535h11v8h-11z" fill="none" stroke="#38464f" strokeWidth={2} />
    <path d="M218 531H512M215 538H512M212 545H508" stroke="#fff" strokeWidth={3} strokeDasharray="4 8 2 10" />
    <B x={201} y={531} w={13} h={14} f="#53606b" />
    <B x={515} y={531} w={14} h={14} f="#53606b" />
    <path d="M202 532h8v7h-5v4h8M517 532l4 6 6-5M520 543h7" fill="none" stroke="#fff" strokeWidth={2} />
    <path d="M544 541l6-6M588 535l6 6M615 541l10-7M655 532v11M680 536l6 6M702 536l12 6M733 535l6 6" stroke="#59616f" strokeWidth={2} />
    <path d="M760 533h9l3 5-3 6h-9l-3-6zM786 538l8-6h6l3 6-4 6h-6z" fill="#df4c52" />
    <Tabs y={558} h={21} items={[[33, 247, "Cue template"], [280, 245, "Key page & last, fader sequence"], [525, 246, "Key Song"], [771, 240, "Key Up", true]]} />
    <Key x={912} y={45} w={93} h={24} t="LINE MENU" s={9} />
    <B x={912} y={72} w={93} h={12} f="#fff" />
    <L x={960} y={81} t="Timeline" s={9} a="middle" f="#555" />
    <path d="M913 84v29" stroke="#fff" strokeWidth={3} />
    <B x={918} y={96} w={4} h={7} f="#fff" />
    <L x={928} y={102} t="SELECT PREV" s={8} />
    {[[915, "✎"], [948, "↓"], [981, "↑"]].map(([x, t]) => <Key key={x} x={x as number} y={114} w={26} h={30} t={t as string} f="#b0bac9" c="#4d5965" s={16} />)}
    <B x={915} y={147} w={90} h={15} f="#fff" />
    <L x={960} y={157} t="TRACK" s={9} a="middle" f="#777" />
    <B x={915} y={162} w={90} h={153} f={color.key} />
    <path d="M915 223h90M915 253h90M915 283h90" stroke={color.screen} strokeWidth={3} />
    {["TRIGGERS", "INSERT IN CUE", "ACCEPTS", "TIMECODE CPY", "CLEAR"].map((t, i) => (
      <g key={t}>
        <B x={918} y={173 + i * 31} w={4} h={7} f="#fff" />
        <L x={929} y={180 + i * 31} t={t} s={8} />
      </g>
    ))}
    <path d="M1013 36V582M1070 36V280M1013 280H1185" stroke="#a8b4b8" strokeWidth={3} />
    {[1017, 1074, 1131].map((x, i) => (
      <g key={x}>
        {i < 2 && (
          <>
            <L x={x} y={48} t="CUE 0" s={9} />
            <rect x={x + 27} y={40} width={20} height={10} fill="none" stroke="#9aa" strokeWidth={2} />
            <path d={`M${x + 2} 70h3v5l-3 6`} fill="none" stroke="#fff" strokeWidth={2} />
            <L x={x + 14} y={83} t="Sequence" s={8} />
          </>
        )}
        <B x={x} y={105} w={48} h={2} f="#8c989d" />
        <Key x={x} y={156} w={48} h={25} t="■" s={9} />
        <B x={x} y={181} w={48} h={2} f="#dfe5e6" />
        <rect x={x + 6} y={i < 2 ? 186 : 202} width={38} height={i < 2 ? 90 : 74} fill="url(#fader)" />
        <path d={`M${x} 202h48M${x} 209h48`} stroke="#7381b8" strokeWidth={2} />
        <L x={x + 24} y={i < 2 ? 195 : 210} t={i < 2 ? "100%" : "80%"} s={10} a="middle" b />
      </g>
    ))}
    <B x={1017} y={282} w={105} h={22} f="#ffff3c" />
    <B x={1105} y={282} w={17} h={11} f="#688f42" />
    <L x={1069} y={300} t="MASTER" s={10} a="middle" f="#66743c" />
    <B x={1017} y={304} w={107} h={82} f="#4848f2" />
    <L x={1070} y={312} t="Cue 4" s={9} a="middle" />
    <L x={1070} y={321} t="PREVIEW" s={9} a="middle" />
    <L x={1021} y={334} t="Release" s={9} />
    <path d="M1017 364h107M1017 382h107" stroke="#e8a7e2" strokeWidth={3} />
    <Key x={1017} y={389} w={51} h={24} t="►▌" s={9} line="#dfe5e6" />
    <Key x={1071} y={389} w={51} h={24} t="▌▌" s={8} line="#dfe5e6" />
    <path d="M1020 418h38M1080 418h42M1017 463h42M1080 463h42M1017 530h42M1080 530h42M1017 538h42M1080 538h42" stroke="#7c8a8e" strokeWidth={2} />
    <B x={1062} y={486} w={15} h={15} f="#41a452" />
    <B x={1066} y={490} w={8} h={6} f="#fff" />
    <path d="M1017 549h42M1017 562h42M1080 549h42M1080 562h42" stroke="#3f9d54" strokeWidth={2} />
    <L x={1038} y={559} t="0%" s={10} a="middle" />
    <L x={1101} y={559} t="0%" s={10} a="middle" />
    <L x={1038} y={578} t="Go" s={10} a="middle" />
    <L x={1101} y={578} t="Fwd" s={10} a="middle" />
    <B x={1063} y={567} w={11} h={15} f="#fff" />
    <B x={1068} y={570} w={3} h={9} f="#34495a" />
    <B x={1131} y={285} w={48} h={26} f="#ffff3c" />
    <B x={1162} y={285} w={17} h={10} f="#688f42" />
    <L x={1155} y={306} t="STROBE" s={10} a="middle" f="#66743c" />
    <L x={1158} y={322} t="Cue 4" s={9} a="middle" />
    <L x={1158} y={331} t="STROBE" s={9} a="middle" />
    <L x={1134} y={340} t="Selected" s={9} />
    <path d="M1134 370h45M1134 391h45" stroke="#d9948f" strokeWidth={3} />
    <B x={1137} y={402} w={38} h={60} f="#4848f2" />
    <rect x={1137} y={462} width={38} height={90} fill="url(#fader)" />
    <path d="M1132 402v148M1178 402v148M1132 457h47M1132 514h47" stroke="#77858c" strokeWidth={2} />
    <L x={1156} y={411} t="100%" s={10} a="middle" />
    <Key x={1131} y={549} w={48} h={31} t="►" s={9} />
    <EmptyDock />
    <Dock x={351} pitch={63.3} status={984} />
    <SystemKeys x={1071} />
  </Screen>
);

/* ---------- icons ---------- */

const PatchIcon = () => (
  <svg width="110" height="110" viewBox="123 550 330 330" fill="#fff" aria-hidden="true">
    <path d="M452 552C440 574 420 563 396 574M160 826C137 838 124 854 125 879" fill="none" stroke="#fff" strokeWidth="3" />
    <path d="M386 569L401 573L400 582L396 590L399 595L389 610L361 588L373 579Z" />
    <path d="M349 586L359 590L388 613L387 622L345 669L305 636L343 590Z" />
    <path d="M303 639L342 671L325 696L309 684L298 690L283 706L275 704L274 695L293 676L278 660L281 653L292 652Z" />
    <path d="M233 716Q253 720 263 740L262 746L250 759L221 735L222 727Z" />
    <path d="M212 738Q230 744 245 766V774L203 814L170 786L172 773L202 740Z" />
    <path d="M169 791L199 816L190 822L177 820L168 828L160 829L157 822L163 812L160 807Z" />
  </svg>
);

const PencilIcon = () => (
  <svg width="100" height="100" viewBox="138 192 300 300" fill="#fff" fillRule="evenodd" aria-hidden="true">
    <path d="M315 192H420V222L302 380L154 491L222 318ZM232 322L178 440L187 430L189 438L202 426L201 448L292 370L236 384Z" />
  </svg>
);

const ClapperIcon = () => (
  <svg width="100" height="100" viewBox="138 192 300 300" fill="#fff" aria-hidden="true">
    <path d="M160 275L190 305L168 309ZM181 259L208 250L245 287L218 294ZM235 241L262 233L300 269L275 276ZM290 223L318 215L356 250L330 258ZM345 205L390 192L403 235L386 240Z" />
    <path d="M170 312H216L193 352H222L248 312H274L250 352H279L305 312H331L307 352H336L362 312H389L365 352H394L413 325V492H170Z" />
  </svg>
);

const LockIcon = () => (
  <svg width="12" height="20" viewBox="0 0 12 20" aria-hidden="true">
    <path d="M1.500 5V4Q2 0.500 6 0.500T10.500 4V8" fill="none" stroke="#fff" />
    <path d="M0 7H11V16H0ZM0 17.500H11V20H0Z" fill="#fff" />
  </svg>
);

const CloneIcon = () => (
  <svg width="20" height="20" viewBox="0 0 20 20" fill="none" stroke="#fff" aria-hidden="true">
    <path d="M6.500 5.500V0.500H19.500V13.500H14.500M0.500 5.500H14.500V19.500H0.500Z" />
  </svg>
);

const TrashIcon = () => (
  <svg width="20" height="20" viewBox="0 0 20 20" fill="none" stroke="#fff" aria-hidden="true">
    <path d="M0 2.500H20M6.500 2V0.500H13.500V2M2.500 3L4 19.500H16L17.500 3M6.500 5L7.500 16.500M10 5V16.500M13.500 5L12.500 16.500" />
  </svg>
);

const BrandMark = () => (
  <svg width="100" height="44" viewBox="0 0 300 132" aria-hidden="true">
    <defs>
      <linearGradient id="gold" x1="0" y1="0" x2="1" y2="1">
        <stop offset="0" stopColor="#f0cb4d" />
        <stop offset="0.35" stopColor="#fbe67c" />
        <stop offset="0.7" stopColor="#dfb13d" />
        <stop offset="1" stopColor="#c7922c" />
      </linearGradient>
      <radialGradient id="shine" cx="0.45" cy="0" r="0.5">
        <stop offset="0" stopColor="#fffbe0" />
        <stop offset="1" stopColor="#fffbe0" stopOpacity="0" />
      </radialGradient>
    </defs>
    <rect x="7" y="6" width="287" height="121" fill="url(#gold)" />
    <rect x="7" y="6" width="287" height="121" fill="url(#shine)" />
    <path d="M7 66Q120 132 294 108V127H7Z" fill="#fff0bd" />
    <path d="M7 66Q120 132 294 108Q190 134 7 72Z" fill="#fffdf0" />
    <g fill="none" strokeWidth="5" stroke="#8a6526">
      <path d="M87 29L97 79L105 49M115 47V64M115 33V37" />
      <path d="M137 18V36H155" stroke="#c7942e" />
      <path d="M123 49C118 66 126 80 144 80C162 80 166 68 168 54C172 28 212 28 213 55H190" stroke="#a3772b" />
      <path d="M213 58C208 86 172 84 168 54" />
    </g>
  </svg>
);

/* ---------- page ---------- */

const rows = [
  { name: "Patch", icon: <PatchIcon />, screens: [<PatchScreen />, <ShowScreen />, null, null] },
  { name: "Programming", icon: <PencilIcon />, screens: [<ProgrammingScreen />, <VisualScreen />, null, null] },
  { name: "Playback", icon: <ClapperIcon />, screens: [<PlaybackScreen />, <TimelineScreen />, null, null] },
];

export default function App() {
  return (
    <Page>
      <GlobalStyle />
      <Header><Title>Pages</Title></Header>
      <Rows>
        {rows.map((row, r) => (
          <Row key={row.name}>
            <Category type="button">
              {row.icon}
              <CategoryName>{row.name}</CategoryName>
            </Category>
            <Strip>
              {row.screens.map((screen, i) => (
                <Slot key={i}>
                  <Thumb type="button" $selected={i === 0} aria-label={`${row.name} page ${i + 1}`}>{screen}</Thumb>
                  {i === 0 && <SlotNumber>{r + 1}</SlotNumber>}
                  <Tick type="checkbox" aria-label={`Select ${row.name} page ${i + 1}`} />
                </Slot>
              ))}
            </Strip>
          </Row>
        ))}
      </Rows>
      <Footer>
        <Brand type="button" aria-label="Vibe"><BrandMark /></Brand>
        <Action type="button"><LockIcon />Selection</Action>
        <Action type="button"><CloneIcon />Clone</Action>
        <Action type="button" $end><TrashIcon />Delete</Action>
      </Footer>
    </Page>
  );
}
